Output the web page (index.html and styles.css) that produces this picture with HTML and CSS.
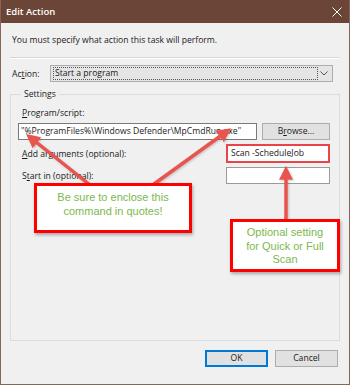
FILE: index.html
```html
<!doctype html>
<html lang="en">
  <head>
    <meta charset="UTF-8" />
    <meta name="viewport" content="width=device-width, initial-scale=1.0" />
    <title>Edit Action</title>
    <link rel="stylesheet" href="styles.css">
  </head>
  <body>
    <div class="window">
      <div class="titlebar">
        <span class="title">Edit Action</span>
        <svg class="close" width="10" height="10" viewBox="0 0 10 10">
          <path d="M0.5 0.5 L9.5 9.5 M9.5 0.5 L0.5 9.5" stroke="#fff" stroke-width="1" />
        </svg>
      </div>
      <div class="content">
        <div class="intro">You must specify what action this task will perform.</div>
        <div class="separator"></div>
        <div class="action-row">
          <label>Ac<u>t</u>ion:</label>
          <div class="select">
            <span class="select-value">Start a program</span>
            <svg class="chevron" width="8" height="5" viewBox="0 0 8 5">
              <path d="M0.5 0.5 L4 4 L7.5 0.5" stroke="#555" fill="none" />
            </svg>
          </div>
        </div>
        <fieldset class="settings">
          <legend>Settings</legend>
          <label class="field-label"><u>P</u>rogram/script:</label>
          <div class="program-row">
            <div class="textbox program">"%ProgramFiles%\Windows Defender\MpCmdRun.exe"</div>
            <div class="button browse">B<u>r</u>owse...</div>
          </div>
          <div class="option-row">
            <label><u>A</u>dd arguments (optional):</label>
            <div class="textbox small highlight">Scan -ScheduleJob</div>
          </div>
          <div class="option-row">
            <label>S<u>t</u>art in (optional):</label>
            <div class="textbox small"></div>
          </div>
        </fieldset>
        <div class="buttons">
          <div class="button default">OK</div>
          <div class="button">Cancel</div>
        </div>
      </div>

      <svg class="arrows" width="350" height="385" viewBox="0 0 350 385">
        <defs>
          <marker id="head" markerWidth="4" markerHeight="4" refX="2.2" refY="2" orient="auto" markerUnits="strokeWidth">
            <path d="M0 0 L4 2 L0 4 Z" fill="#e9544d" />
          </marker>
        </defs>
        <g stroke="#e9544d" stroke-width="3.5" fill="none" stroke-linecap="round">
          <line x1="90" y1="185" x2="31" y2="138" marker-end="url(#head)" />
          <line x1="154" y1="184" x2="226" y2="132" marker-end="url(#head)" />
          <line x1="286" y1="220" x2="286" y2="172" marker-end="url(#head)" />
        </g>
      </svg>

      <div class="callout quotes">Be sure to enclose this<br>command in quotes!</div>
      <div class="callout scan">Optional setting<br>for Quick or Full<br>Scan</div>
    </div>
  </body>
</html>
```

FILE: styles.css
```css
body {
  margin: 0;
  font-family: "Open Sans", "Noto Sans", sans-serif;
  font-size: 8.6px;
  color: #1a1a1a;
}
.window {
  position: relative;
  width: 350px;
  height: 385px;
  box-sizing: border-box;
  background-color: #f0f0f0;
  border: 1px solid #86645a;
  border-top: none;
  overflow: hidden;
}
.titlebar {
  height: 23px;
  background-color: #6b4536;
  color: #fff;
  display: flex;
  align-items: center;
  justify-content: space-between;
  padding: 0 8px 0 6px;
  margin: 0 -1px;
}
.title {
  font-weight: 600;
  font-size: 9.5px;
}
.content {
  padding: 0 9px 0 9px;
}
.intro {
  margin-top: 11px;
  padding-left: 2px;
  line-height: 12px;
}
.separator {
  margin-top: 11px;
  border-top: 1px solid #d5d5d5;
  border-bottom: 1px solid #fff;
  margin-right: 1px;
}
.action-row {
  display: flex;
  align-items: center;
  margin-top: 6px;
  padding-left: 2px;
}
.action-row label {
  width: 38px;
}
.select {
  flex-grow: 1;
  margin-right: 7px;
  height: 15px;
  background-color: #e5e5e5;
  border: 1px solid #adadad;
  display: flex;
  align-items: center;
  justify-content: space-between;
  position: relative;
}
.select-value {
  border: 1px dotted #555;
  flex-grow: 1;
  height: 11px;
  line-height: 11px;
  margin: 1px 14px 1px 2px;
  padding-left: 1px;
}
.chevron {
  position: absolute;
  right: 4px;
  top: 5px;
}
.settings {
  margin: 7px 0 0 0;
  padding: 8px 9px 0 7px;
  height: 252px;
  border: 1px solid #dcdcdc;
  box-sizing: border-box;
}
.settings legend {
  padding: 0 3px;
  margin-left: 3px;
  line-height: 10px;
}
.field-label {
  display: block;
  margin-left: 4px;
  line-height: 12px;
}
.program-row {
  display: flex;
  gap: 5px;
  margin-top: 4px;
}
.textbox {
  height: 17px;
  box-sizing: border-box;
  background-color: #fff;
  border: 1px solid #7a7a7a;
  line-height: 15px;
  padding-left: 2px;
  white-space: nowrap;
  overflow: hidden;
}
.textbox.program {
  width: 239px;
  flex-shrink: 0;
}
.textbox.small {
  width: 104px;
  border-color: #9a9a9a;
  height: 17px;
}
.textbox.highlight {
  border: 2px solid #e8444a;
  height: 19px;
  line-height: 15px;
  padding-left: 3px;
}
.button {
  box-sizing: border-box;
  height: 17px;
  border: 1px solid #adadad;
  background-color: #e1e1e1;
  text-align: center;
  line-height: 15px;
}
.browse {
  width: 68px;
}
.option-row {
  display: flex;
  justify-content: space-between;
  align-items: center;
  padding-left: 4px;
  margin-top: 4px;
}
.option-row + .option-row {
  margin-top: 4px;
}
.buttons {
  display: flex;
  justify-content: flex-end;
  gap: 7px;
  margin-top: 9px;
  margin-right: 2px;
}
.buttons .button {
  width: 63px;
}
.button.default {
  border: 1px solid #0078d7;
  box-shadow: inset 0 0 0 1px #0078d7;
}
.arrows {
  position: absolute;
  left: -1px;
  top: 0;
  filter: drop-shadow(1px 1px 1px rgba(0, 0, 0, 0.2));
}
.callout {
  position: absolute;
  box-sizing: border-box;
  background-color: #fff;
  border: 3px solid #f00;
  box-shadow: 1px 2px 3px rgba(0, 0, 0, 0.3);
  color: #7cb84e;
  font-family: "Liberation Sans", Arial, sans-serif;
  font-size: 11px;
  line-height: 13.5px;
  text-align: center;
}
.quotes {
  left: 33px;
  top: 183px;
  width: 158px;
  height: 50px;
  padding-top: 5px;
}
.scan {
  left: 229px;
  top: 219px;
  width: 110px;
  height: 53px;
  padding-top: 4px;
}
```
